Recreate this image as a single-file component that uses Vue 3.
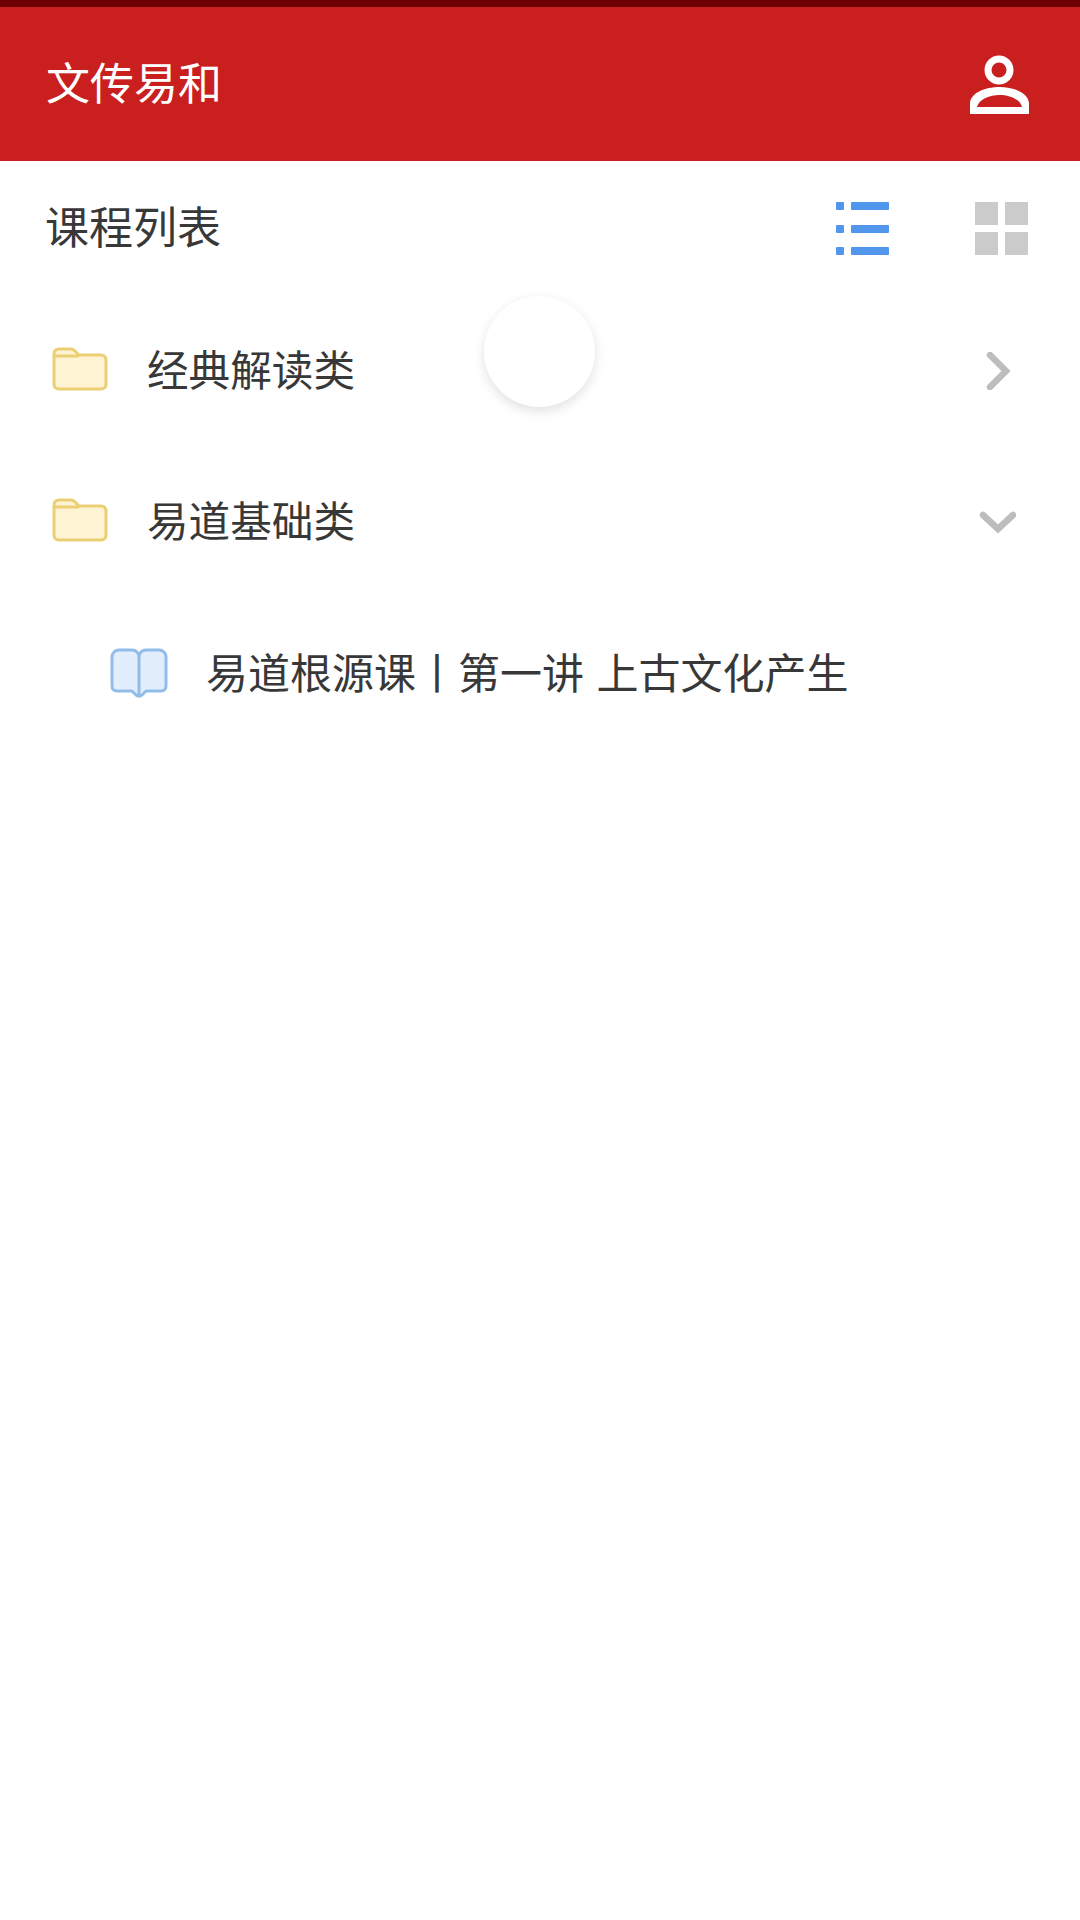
<script setup>
const folders = [
  { name: '经典解读类', open: false },
  { name: '易道基础类', open: true }
]
</script>

<template>
  <div class="page">
    <div class="status"></div>
    <header class="header">
      <h1 class="title">文传易和</h1>
      <svg class="user" width="60" height="60" viewBox="0 0 60 60">
        <circle cx="29" cy="16" r="11" fill="none" stroke="#fff" stroke-width="7" />
        <path d="M0 60V50C0 39 15 33 29.500 33S59 39 59 50V60ZM7 53C9 45 20 41 29.500 41S50 45 52 53Z" fill="#fff" fill-rule="evenodd" />
      </svg>
    </header>
    <section class="toolbar">
      <h2 class="heading">课程列表</h2>
      <div class="views">
        <svg width="54" height="54" viewBox="0 0 54 54" fill="#4f96ec">
          <rect x="0" y="0" width="8" height="8" rx="1" /><rect x="15" y="0" width="38" height="8" rx="1" />
          <rect x="0" y="23" width="8" height="8" rx="1" /><rect x="15" y="23" width="38" height="8" rx="1" />
          <rect x="0" y="45" width="8" height="8" rx="1" /><rect x="15" y="45" width="38" height="8" rx="1" />
        </svg>
        <svg width="53" height="54" viewBox="0 0 53 54" fill="#cbcbcb">
          <rect x="0" y="0" width="23" height="23" /><rect x="30" y="0" width="23" height="23" />
          <rect x="0" y="30" width="23" height="23" /><rect x="30" y="30" width="23" height="23" />
        </svg>
      </div>
    </section>
    <ul class="list">
      <li v-for="f in folders" :key="f.name" class="row">
        <svg class="folder" width="56" height="44" viewBox="0 0 56 44">
          <path d="M2 9V7C2 4 4 2 7 2H19C21 2 22 3 23 4L27 8H49C52 8 54 10 54 13V37C54 40 52 42 49 42H7C4 42 2 40 2 37Z" fill="#fef3d2" stroke="#ebcf74" stroke-width="3" stroke-linejoin="round" />
          <path d="M2 9H27" fill="none" stroke="#ebcf74" stroke-width="3" />
        </svg>
        <span class="label">{{ f.name }}</span>
        <svg v-if="f.open" class="chev down" width="38" height="26" viewBox="0 0 38 26">
          <path d="M5 5L20 19L35 5" fill="none" stroke="#bdbdbd" stroke-width="6.500" stroke-linecap="round" stroke-linejoin="miter" />
        </svg>
        <svg v-else class="chev" width="38" height="38" viewBox="0 0 38 38">
          <path d="M12 3L28 19L12 35" fill="none" stroke="#bdbdbd" stroke-width="6.500" stroke-linecap="round" stroke-linejoin="miter" />
        </svg>
      </li>
      <li class="row sub">
        <svg class="book" width="58" height="50" viewBox="0 0 58 50">
          <path d="M29 9C29 5 26 2 22 2H9C5 2 2 5 2 9V38C2 41 4 43 7 43H22L26 47C28 48.500 30 48.500 32 47L36 43H51C54 43 56 41 56 38V9C56 5 53 2 49 2H36C32 2 29 5 29 9Z" fill="#e2eefc" stroke="#92bde8" stroke-width="3" stroke-linejoin="round" />
          <path d="M29 9V47" fill="none" stroke="#92bde8" stroke-width="3" />
        </svg>
        <span class="label wide">易道根源课丨第一讲 上古文化产生</span>
      </li>
    </ul>
    <div class="fab"></div>
  </div>
</template>

<style scoped>
.page {
  position: relative;
  width: 1080px;
  height: 1920px;
  background: #fff;
  overflow: hidden;
  font-family: "Noto Sans CJK SC", "Noto Sans", sans-serif;
  color: #383838;
}
.status { height: 7px; background: #6e0005; }
.header {
  height: 154px;
  background: #c91f1f;
  display: flex;
  align-items: center;
  justify-content: space-between;
  padding: 0 50px 0 46px;
  box-sizing: border-box;
}
.title {
  margin: 0 0 5px;
  font-size: 44px;
  font-weight: 400;
  line-height: 1.2;
  color: #fff;
}
.toolbar {
  height: 134px;
  display: flex;
  align-items: center;
  justify-content: space-between;
  padding: 0 52px 0 45px;
  box-sizing: border-box;
}
.heading {
  margin: 0 0 5px;
  font-size: 44px;
  font-weight: 400;
  line-height: 1.2;
  color: #383838;
}
.views { display: flex; align-items: center; gap: 85px; margin-top: 2px; }
.list { list-style: none; margin: 0; padding: 0; }
.row {
  height: 151px;
  display: flex;
  align-items: center;
  padding: 0 64px 0 52px;
  box-sizing: border-box;
}
.folder { flex: none; margin: 0 39px 4px 0; }
.label {
  flex: 1;
  font-size: 41.600px;
  line-height: 1.2;
  margin-bottom: 3px;
  color: #383838;
  white-space: pre;
}
.wide { font-size: 42px; word-spacing: 3px; letter-spacing: 0; }
.chev { flex: none; }
.down { margin-top: 2px; }
.sub { padding-left: 110px; }
.book { flex: none; margin-right: 38px; }
.fab {
  position: absolute;
  left: 484px;
  top: 296px;
  width: 111px;
  height: 111px;
  border-radius: 50%;
  background: #fff;
  box-shadow: 0 4px 12px rgba(0, 0, 0, 0.12);
}
</style>
